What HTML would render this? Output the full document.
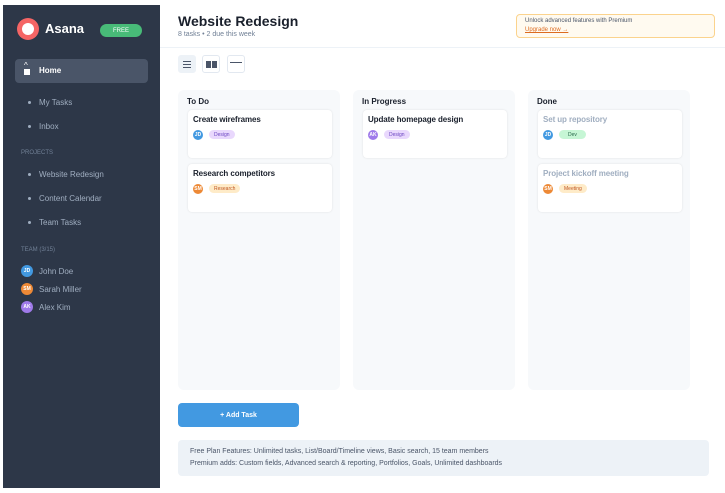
<!DOCTYPE html>
<html><head><style>
*{box-sizing:border-box;margin:0;padding:0}
body{width:725px;height:493px;background:#fff;font-family:"Liberation Sans",sans-serif;position:relative;overflow:hidden}
.sb{position:absolute;left:3px;top:5px;width:157px;height:483px;background:#2d3748;color:#cbd5e0}
.abs{position:absolute}
.fc{display:flex;align-items:center;justify-content:center}
.logo{left:14px;top:13px;width:22px;height:22px;border-radius:50%;background:#f56565}
.logo:after{content:"";position:absolute;left:5px;top:5px;width:12px;height:12px;border-radius:50%;background:#fff}
.nav{font-size:8px;color:#a0aec0}
.dot{width:3px;height:3px;border-radius:50%;background:#a0aec0}
.av{width:10px;height:10px;border-radius:50%;font-size:5px;color:#fff;font-weight:bold;display:flex;align-items:center;justify-content:center}
.col{position:absolute;top:90px;width:162px;height:300px;background:#f7f9fb;border-radius:6px}
.col h3{position:absolute;left:9px;top:7px;font-size:8px;color:#1a202c}
.card{position:absolute;left:10px;width:144px;height:48px;background:#fff;border-radius:4px;box-shadow:0 0 2px rgba(0,0,0,.1)}
.card .t{position:absolute;left:5px;top:5px;font-size:8px;color:#1a202c;font-weight:bold;letter-spacing:-0.1px}
.card .a{position:absolute;left:5px;top:20px}
.tag{position:absolute;left:21px;top:20px;height:9px;border-radius:5px;font-size:5px;padding:0 5px;display:flex;align-items:center}
.tb{position:absolute;top:55px;width:18px;height:18px;border:1px solid #e2e8f0;border-radius:3px;background:#fff}
</style></head><body>
<div class="sb">
 <div class="abs logo"></div>
 <div class="abs" style="left:42px;top:16px;font-size:13px;font-weight:bold;color:#fff">Asana</div>
 <div class="abs fc" style="left:97px;top:19px;width:42px;height:13px;border-radius:7px;background:#48bb78;color:#fff;font-size:6px">FREE</div>
 <div class="abs" style="left:12px;top:54px;width:133px;height:24px;border-radius:4px;background:#4a5568"></div>
 <div class="abs" style="left:21px;top:58px;color:#fff;font-size:8px;line-height:6px">^<br><span style="display:inline-block;width:6px;height:6px;background:#fff"></span></div>
 <div class="abs nav" style="left:36px;top:61px;color:#fff;font-weight:bold">Home</div>
 <div class="abs dot" style="left:25px;top:96px"></div><div class="abs nav" style="left:36px;top:93px">My Tasks</div>
 <div class="abs dot" style="left:25px;top:120px"></div><div class="abs nav" style="left:36px;top:117px">Inbox</div>
 <div class="abs" style="left:18px;top:145px;font-size:6px;color:#718096">PROJECTS</div>
 <div class="abs dot" style="left:25px;top:168px"></div><div class="abs nav" style="left:36px;top:165px">Website Redesign</div>
 <div class="abs dot" style="left:25px;top:192px"></div><div class="abs nav" style="left:36px;top:189px">Content Calendar</div>
 <div class="abs dot" style="left:25px;top:216px"></div><div class="abs nav" style="left:36px;top:213px">Team Tasks</div>
 <div class="abs" style="left:18px;top:242px;font-size:6px;color:#718096">TEAM (3/15)</div>
 <div class="abs av" style="left:18px;top:260px;width:12px;height:12px;background:#4299e1">JD</div><div class="abs nav" style="left:36px;top:262px">John Doe</div>
 <div class="abs av" style="left:18px;top:278px;width:12px;height:12px;background:#ed8936">SM</div><div class="abs nav" style="left:36px;top:280px">Sarah Miller</div>
 <div class="abs av" style="left:18px;top:296px;width:12px;height:12px;background:#9f7aea">AK</div><div class="abs nav" style="left:36px;top:298px">Alex Kim</div>
</div>
<div class="abs" style="left:160px;top:47px;width:565px;height:1px;background:#edf2f7"></div>
<div class="abs" style="left:178px;top:13px;font-size:14px;font-weight:bold;color:#1a202c">Website Redesign</div>
<div class="abs" style="left:178px;top:31px;font-size:7px;color:#718096">8 tasks • 2 due this week</div>
<div class="abs" style="left:516px;top:14px;width:199px;height:24px;border:1px solid #fbd38d;border-radius:4px;background:#fffaf0"></div>
<div class="abs" style="left:525px;top:18px;font-size:6px;color:#4a5568">Unlock advanced features with Premium</div>
<div class="abs" style="left:525px;top:27px;font-size:6px;color:#dd6b20;text-decoration:underline">Upgrade now →</div>
<div class="tb" style="left:178px;background:#edf2f7;border-color:#edf2f7"><div class="abs" style="left:4px;top:5px;width:8px;height:1px;background:#4a5568;box-shadow:0 3px 0 #4a5568,0 6px 0 #4a5568"></div></div>
<div class="tb" style="left:202px"><div class="abs" style="left:3px;top:5px;width:5px;height:7px;background:#4a5568"></div><div class="abs" style="left:9px;top:5px;width:5px;height:7px;background:#4a5568"></div></div>
<div class="tb" style="left:227px"><div class="abs" style="left:2px;top:6px;width:12px;height:1px;background:#4a5568"></div></div>
<div class="col" style="left:178px"><h3>To Do</h3>
 <div class="card" style="top:20px"><div class="t">Create wireframes</div><div class="a av" style="background:#4299e1">JD</div><div class="tag" style="background:#e9d8fd;color:#6b46c1">Design</div></div>
 <div class="card" style="top:74px"><div class="t">Research competitors</div><div class="a av" style="background:#ed8936">SM</div><div class="tag" style="background:#feebc8;color:#c05621">Research</div></div>
</div>
<div class="col" style="left:353px"><h3>In Progress</h3>
 <div class="card" style="top:20px"><div class="t">Update homepage design</div><div class="a av" style="background:#9f7aea">AK</div><div class="tag" style="background:#e9d8fd;color:#6b46c1">Design</div></div>
</div>
<div class="col" style="left:528px"><h3>Done</h3>
 <div class="card" style="top:20px"><div class="t" style="color:#a0aec0">Set up repository</div><div class="a av" style="background:#4299e1">JD</div><div class="tag" style="background:#c6f6d5;color:#276749;padding:0 9px">Dev</div></div>
 <div class="card" style="top:74px"><div class="t" style="color:#a0aec0">Project kickoff meeting</div><div class="a av" style="background:#ed8936">SM</div><div class="tag" style="background:#feebc8;color:#c05621">Meeting</div></div>
</div>
<div class="abs fc" style="left:178px;top:403px;width:121px;height:24px;border-radius:4px;background:#4299e1;color:#fff;font-size:7px;font-weight:bold">+ Add Task</div>
<div class="abs" style="left:178px;top:440px;width:531px;height:36px;border-radius:4px;background:#edf2f7;font-size:7px;color:#4a5568;padding:6px 12px;line-height:12px">Free Plan Features: Unlimited tasks, List/Board/Timeline views, Basic search, 15 team members<br>Premium adds: Custom fields, Advanced search &amp; reporting, Portfolios, Goals, Unlimited dashboards</div>
</body></html>
